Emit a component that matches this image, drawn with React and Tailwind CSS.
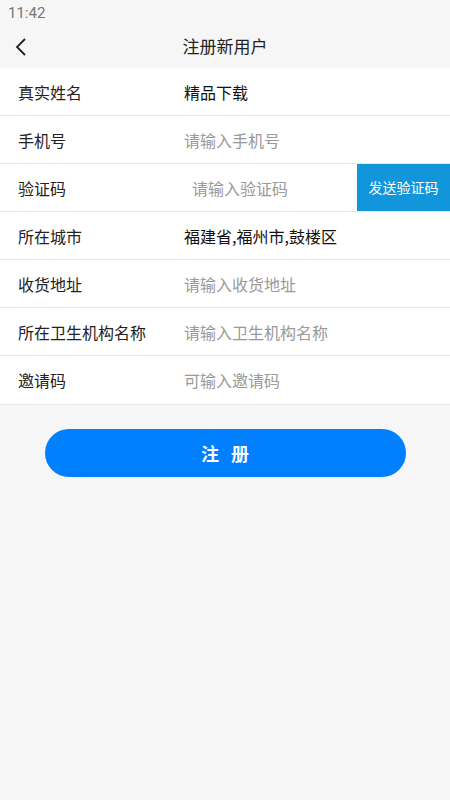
import React from "react";

const font = { fontFamily: '"Noto Sans CJK SC", "Noto Sans", sans-serif' };

function Row({ label, value, placeholder, last }) {
  return (
    <div className={`flex h-12 items-center bg-white ${last ? "" : "border-b border-[#e9e9e9]"}`}>
      <div className="w-[184px] pl-[18px] text-[16px] text-[#222]">{label}</div>
      {value ? (
        <div className="text-[16px] text-[#111]">{value}</div>
      ) : (
        <div className="text-[16px] text-[#999]">{placeholder}</div>
      )}
    </div>
  );
}

export default function App() {
  return (
    <div className="min-h-[800px] w-[450px] bg-[#f6f6f6]" style={font}>
      <div className="flex h-6 items-center pl-2 pt-[2px] text-[15px] text-[#777]" style={{ fontFamily: "Roboto, sans-serif" }}>
        11:42
      </div>
      <div className="relative flex h-11 items-center justify-center">
        <svg className="absolute left-[14px] top-[13px]" width="14" height="20" viewBox="0 0 14 20">
          <path d="M11 2 L3 10 L11 18" fill="none" stroke="#222" strokeWidth="1.8" />
        </svg>
        <div className="text-[17px] text-[#222]">注册新用户</div>
      </div>
      <div className="border-b border-[#e9e9e9]">
        <Row label="真实姓名" value="精品下载" />
        <Row label="手机号" placeholder="请输入手机号" />
        <div className="flex h-12 items-stretch border-b border-[#e9e9e9] bg-white">
          <div className="flex w-[184px] items-center pl-[18px] text-[16px] text-[#222]">验证码</div>
          <div className="flex flex-1 items-center pl-2 text-[16px] text-[#999]">请输入验证码</div>
          <div className="flex w-[93px] items-center justify-center bg-[#1296db] text-[14px] text-white">发送验证码</div>
        </div>
        <Row label="所在城市" value="福建省,福州市,鼓楼区" />
        <Row label="收货地址" placeholder="请输入收货地址" />
        <Row label="所在卫生机构名称" placeholder="请输入卫生机构名称" />
        <Row label="邀请码" placeholder="可输入邀请码" last />
      </div>
      <div className="flex justify-center pt-6">
        <button className="flex h-12 w-[361px] items-center justify-center rounded-full bg-[#0080ff] pl-[12px] text-[18px] font-bold tracking-[12px] text-white">
          注册
        </button>
      </div>
    </div>
  );
}
